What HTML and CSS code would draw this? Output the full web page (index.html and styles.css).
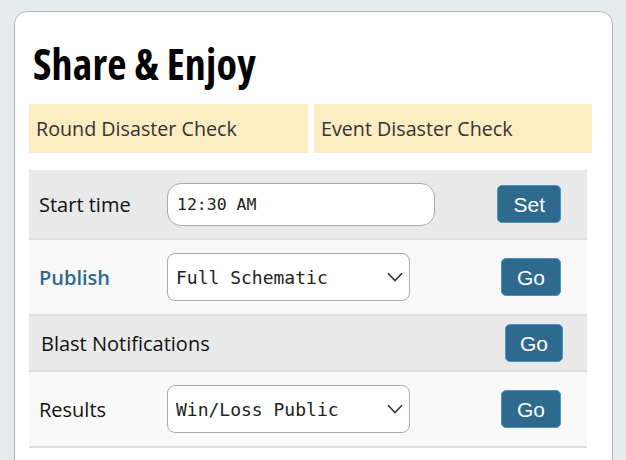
FILE: index.html
```html
<!DOCTYPE html>
<html lang="en">
<head>
<meta charset="utf-8">
<title>Share &amp; Enjoy</title>
<link rel="stylesheet" href="styles.css">
</head>
<body>
<main class="card">
  <h1 class="title">Share &amp; Enjoy</h1>
  <div class="checks">
    <div class="check">Round Disaster Check</div>
    <div class="check">Event Disaster Check</div>
  </div>
  <div class="table">
    <div class="row row-dark row-start">
      <div class="label">Start time</div>
      <div class="control"><input class="time-input" type="text" value="12:30 AM"></div>
      <div class="action"><button class="btn">Set</button></div>
    </div>
    <div class="row row-light row-publish">
      <div class="label label-link">Publish</div>
      <div class="control">
        <div class="select-wrap">
          <select class="select"><option>Full Schematic</option></select>
          <svg class="chevron" width="16" height="10" viewBox="0 0 16 10"><path d="M1 1.2 L8 8.5 L15 1.2" fill="none" stroke="#333" stroke-width="1.6"/></svg>
        </div>
      </div>
      <div class="action"><button class="btn">Go</button></div>
    </div>
    <div class="row row-dark row-blast">
      <div class="label label-wide">Blast Notifications</div>
      <div class="action"><button class="btn btn-narrow">Go</button></div>
    </div>
    <div class="row row-light row-results">
      <div class="label">Results</div>
      <div class="control">
        <div class="select-wrap">
          <select class="select"><option>Win/Loss Public</option></select>
          <svg class="chevron" width="16" height="10" viewBox="0 0 16 10"><path d="M1 1.2 L8 8.5 L15 1.2" fill="none" stroke="#333" stroke-width="1.6"/></svg>
        </div>
      </div>
      <div class="action"><button class="btn">Go</button></div>
    </div>
  </div>
</main>
</body>
</html>
```
FILE: styles.css
```css
html, body {
  margin: 0;
  padding: 0;
}
body {
  background: #e6ebee;
  font-family: "Open Sans", "Noto Sans", sans-serif;
  color: #222;
  overflow: hidden;
}
.card {
  margin: 11px 0 0 14px;
  width: 599px;
  box-sizing: border-box;
  min-height: 520px;
  background: #fff;
  border: 1px solid #b4b4b4;
  border-radius: 13px;
  padding: 27px 20px 0 14px;
}
.title {
  margin: 0;
  font-family: "Open Sans", sans-serif;
  font-stretch: 75%;
  font-weight: 700;
  font-size: 42px;
  line-height: 50px;
  color: #000;
  padding-left: 4px;
  letter-spacing: 0.2px;
}
.checks {
  margin-top: 15px;
  display: grid;
  grid-template-columns: 279px 278px;
  gap: 6px;
}
.check {
  background: #fcecc1;
  height: 49px;
  display: flex;
  align-items: center;
  padding-left: 7px;
  font-size: 19.7px;
  color: #333;
}
.table {
  margin-top: 17px;
  width: 558px;
}
.row {
  display: flex;
  align-items: center;
  border-bottom: 2px solid #dedede;
  box-sizing: border-box;
}
.row-dark { background: #e9e9e9; }
.row-light { background: #f9f9f9; }
.row-start { height: 70px; }
.row-publish { height: 76px; }
.row-blast { height: 56px; }
.row-results { height: 76px; }
.label {
  width: 128px;
  padding-left: 10px;
  font-size: 20px;
  font-stretch: 90%;
  color: #111;
}
.label-link {
  color: #2e6a8e;
  font-weight: 600;
}
.label-wide {
  flex: 1;
  padding-left: 12px;
}
.control {
  flex: 1;
  display: flex;
}
.time-input {
  width: 268px;
  height: 43px;
  box-sizing: border-box;
  border: 1px solid #aaa;
  border-radius: 14px;
  background: #fff;
  padding: 0 0 0 9px;
  font-family: "DejaVu Sans Mono", monospace;
  font-size: 16.5px;
  color: #222;
  outline: none;
}
.select-wrap {
  position: relative;
  width: 243px;
  height: 48px;
}
.select {
  appearance: none;
  -webkit-appearance: none;
  width: 100%;
  height: 100%;
  box-sizing: border-box;
  border: 1px solid #aaa;
  border-radius: 8px;
  background: #fff;
  padding: 0 0 0 8px;
  font-family: "DejaVu Sans Mono", monospace;
  font-size: 18px;
  color: #222;
}
.chevron {
  position: absolute;
  left: 220px;
  top: 19px;
}
.action {
  display: flex;
  justify-content: flex-end;
  padding-right: 26px;
}
.row-blast .action {
  padding-right: 24px;
}
.btn {
  height: 38px;
  box-sizing: border-box;
  padding: 0 15px;
  background: #2e6a8e;
  border: 1px solid #4a93c6;
  border-radius: 5px;
  color: #fff;
  font-family: "Liberation Sans", Arial, sans-serif;
  font-size: 21px;
  line-height: 1;
}
.btn-narrow {
  padding: 0 14px;
}
```
